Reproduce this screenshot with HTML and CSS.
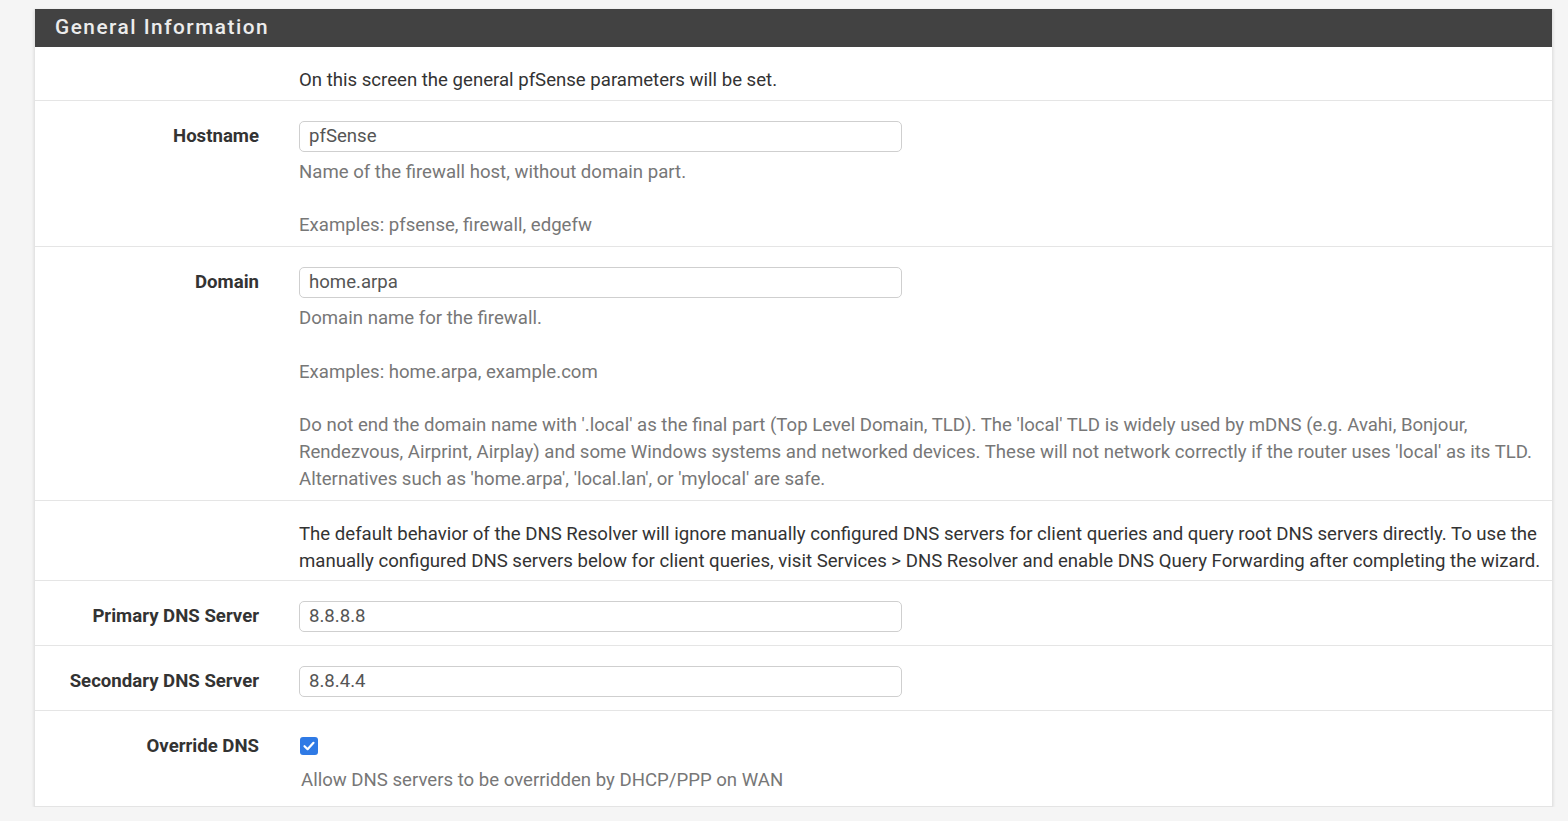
FILE: index.html
```html
<!DOCTYPE html>
<html>
<head>
<meta charset="utf-8">
<link rel="stylesheet" href="styles.css">
</head>
<body>
<div class="page">
  <div class="panel">
    <div class="panel-heading">General Information</div>
    <div class="panel-body">
      <div class="row row-text">
        <div class="label"></div>
        <div class="content info">On this screen the general pfSense parameters will be set.</div>
      </div>
      <div class="row row-help">
        <div class="label">Hostname</div>
        <div class="content">
          <div class="input">pfSense</div>
          <div class="help">Name of the firewall host, without domain part.<br><br>Examples: pfsense, firewall, edgefw</div>
        </div>
      </div>
      <div class="row row-help">
        <div class="label">Domain</div>
        <div class="content">
          <div class="input">home.arpa</div>
          <div class="help">Domain name for the firewall.<br><br>Examples: home.arpa, example.com<br><br>Do not end the domain name with '.local' as the final part (Top Level Domain, TLD). The 'local' TLD is widely used by mDNS (e.g. Avahi, Bonjour, Rendezvous, Airprint, Airplay) and some Windows systems and networked devices. These will not network correctly if the router uses 'local' as its TLD. Alternatives such as 'home.arpa', 'local.lan', or 'mylocal' are safe.</div>
        </div>
      </div>
      <div class="row row-text">
        <div class="label"></div>
        <div class="content info">The default behavior of the DNS Resolver will ignore manually configured DNS servers for client queries and query root DNS servers directly. To use the manually configured DNS servers below for client queries, visit Services &gt; DNS Resolver and enable DNS Query Forwarding after completing the wizard.</div>
      </div>
      <div class="row row-input">
        <div class="label">Primary DNS Server</div>
        <div class="content">
          <div class="input">8.8.8.8</div>
        </div>
      </div>
      <div class="row row-input">
        <div class="label">Secondary DNS Server</div>
        <div class="content">
          <div class="input">8.8.4.4</div>
        </div>
      </div>
      <div class="row row-check">
        <div class="label">Override DNS</div>
        <div class="content">
          <div class="checkbox"><svg width="18" height="18" viewBox="0 0 18 18"><rect x="0" y="0" width="18" height="18" rx="3" fill="#2f7ae5"/><path d="M4.5 9.2 L7.6 12.2 L13.5 5.8" fill="none" stroke="#fff" stroke-width="2.2" stroke-linecap="round" stroke-linejoin="round"/></svg></div>
          <div class="help help-check">Allow DNS servers to be overridden by DHCP/PPP on WAN</div>
        </div>
      </div>
    </div>
  </div>
</div>
</body>
</html>
```
FILE: styles.css
```css
html, body {
  margin: 0;
  padding: 0;
  background: #f5f5f5;
}
body {
  font-family: Roboto, "Liberation Sans", sans-serif;
  font-size: 18.6px;
  line-height: 26.8px;
  color: #333;
}
.page {
  padding: 9px 15px 0 34px;
}
.panel {
  background: #fff;
  border: 1px solid #e4e4e4;
  border-top: none;
  box-shadow: 0 1px 3px rgba(0,0,0,0.12);
}
.panel-heading {
  background: #424242;
  color: #ececec;
  height: 38px;
  line-height: 37px;
  padding-left: 20px;
  font-size: 20.8px;
  font-weight: 500;
  letter-spacing: 1.5px;
}
.row {
  display: grid;
  grid-template-columns: 224px 1fr;
  column-gap: 40px;
  border-top: 1px solid #e5e5e5;
  padding: 20px 8px 6px 0;
}
.row:first-child {
  border-top: none;
}
.row-help {
  padding-bottom: 7px;
}
.row-input {
  padding-bottom: 13px;
}
.row-check {
  padding-bottom: 12px;
}
.label {
  text-align: right;
  font-weight: 700;
  color: #333;
  padding-top: 2px;
}
.input {
  box-sizing: border-box;
  width: 603px;
  height: 31px;
  border: 1px solid #cfcfcf;
  border-radius: 5px;
  padding: 0 9px;
  line-height: 29px;
  color: #555;
}
.help {
  margin-top: 7px;
  color: #777;
}
.info {
  color: #333;
}
.checkbox {
  height: 18px;
  padding: 6px 0 0 1px;
}
.checkbox svg {
  display: block;
}
.help-check {
  margin-top: 12px;
  padding-left: 2px;
}
```
